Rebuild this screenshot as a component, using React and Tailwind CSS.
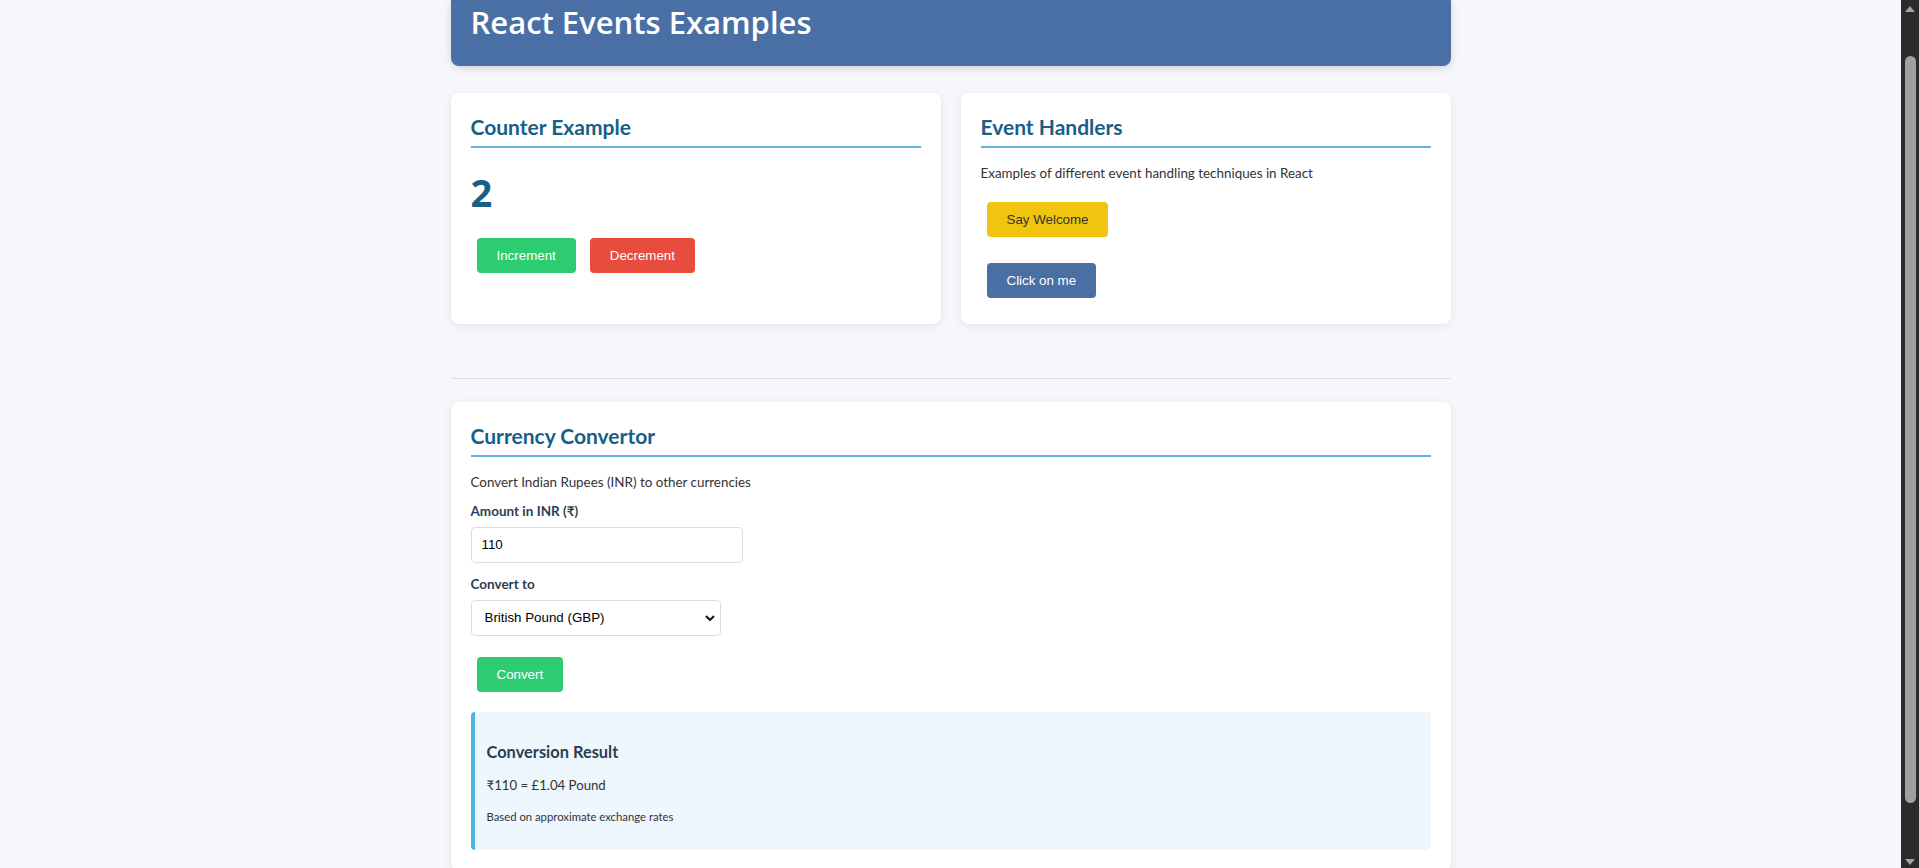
import { useState } from "react";

const rates = {
  USD: { label: "US Dollar (USD)", symbol: "$", rate: 0.012, name: "Dollar" },
  EUR: { label: "Euro (EUR)", symbol: "€", rate: 0.011, name: "Euro" },
  GBP: { label: "British Pound (GBP)", symbol: "£", rate: 0.0095, name: "Pound" },
  JPY: { label: "Japanese Yen (JPY)", symbol: "¥", rate: 1.8, name: "Yen" },
};

function Card({ title, children, className = "" }) {
  return (
    <div className={"rounded-lg bg-white p-5 shadow-[0_2px_10px_rgba(0,0,0,0.08)] " + className}>
      <h2 className="mt-[2px] border-b-2 border-[#5fb5dd] pb-[7px] text-[21px] font-bold leading-[24px] text-[#166088]">
        {title}
      </h2>
      {children}
    </div>
  );
}

function Btn({ children, className = "", onClick }) {
  return (
    <button
      onClick={onClick}
      className={
        "h-[35px] rounded px-5 font-['Liberation_Sans',Arial,sans-serif] text-[13.33px] " + className
      }
    >
      {children}
    </button>
  );
}

function Scrollbar() {
  return (
    <div className="flex h-full w-[18px] shrink-0 flex-col items-center bg-[#2b2b2b]">
      <svg width="10" height="6" viewBox="0 0 10 6" className="mt-[6px]">
        <polygon points="5,0 10,6 0,6" fill="#a3a3a3" />
      </svg>
      <div className="mt-[44px] h-[747px] w-[11px] rounded-full bg-[#a0a0a0]" />
      <div className="flex-1" />
      <svg width="10" height="6" viewBox="0 0 10 6" className="mb-[3px]">
        <polygon points="0,0 10,0 5,6" fill="#a3a3a3" />
      </svg>
    </div>
  );
}

export default function App() {
  const [count, setCount] = useState(2);
  const [amount, setAmount] = useState("110");
  const [currency, setCurrency] = useState("GBP");
  const [result, setResult] = useState({ amount: "110", currency: "GBP" });

  const cur = rates[result.currency];
  const converted = (parseFloat(result.amount || 0) * cur.rate).toFixed(2);

  return (
    <div className="flex h-screen w-full overflow-hidden bg-[#f5f7fa] font-['Lato','Open_Sans',sans-serif] text-[#333]">
      <div className="min-w-0 flex-1 overflow-hidden">
        <div className="mx-auto w-[1000px]">
          {/* header */}
          <header className="h-[66px] rounded-b-lg bg-[#4a6fa5] px-5 pt-[4px] shadow-[0_2px_8px_rgba(0,0,0,0.15)]">
            <h1 className="font-['Open_Sans',sans-serif] text-[31px] font-semibold leading-[1.2] text-white">
              React Events Examples
            </h1>
          </header>

          <div className="mt-[27px] grid grid-cols-2 gap-5">
            <Card title="Counter Example">
              <div className="mt-[25px] font-['Open_Sans',sans-serif] text-[38px] font-bold leading-none text-[#166088]">
                {count}
              </div>
              <div className="mt-[27px] flex gap-[14px] pl-[6px]">
                <Btn className="bg-[#2ecc71] text-white" onClick={() => setCount(count + 1)}>
                  Increment
                </Btn>
                <Btn className="bg-[#e74c3c] text-white" onClick={() => setCount(count - 1)}>
                  Decrement
                </Btn>
              </div>
            </Card>

            <Card title="Event Handlers" className="pb-[26px]">
              <p className="mt-[15px] text-[13.4px] leading-[21px]">
                Examples of different event handling techniques in React
              </p>
              <div className="mt-[18px] pl-[6px]">
                <Btn className="bg-[#f1c40f] text-[#333]" onClick={() => alert("Welcome!")}>
                  Say Welcome
                </Btn>
              </div>
              <div className="mt-[26px] pl-[6px]">
                <Btn className="bg-[#4a6fa5] text-white" onClick={() => alert("You clicked me")}>
                  Click on me
                </Btn>
              </div>
            </Card>
          </div>

          <hr className="mt-[54px] border-0 border-t border-[#dde1e6]" />

          <Card title="Currency Convertor" className="mt-[23px]">
            <p className="mt-[15px] text-[13.4px] leading-[21px]">
              Convert Indian Rupees (INR) to other currencies
            </p>
            <label className="mt-[9px] block text-[13.5px] font-bold leading-[19.5px] text-[#2c3e50]">
              Amount in INR (₹)
            </label>
            <input
              type="number"
              value={amount}
              onChange={(e) => setAmount(e.target.value)}
              className="mt-[5px] block h-[36px] w-[272px] rounded border border-[#ddd] px-[10px] font-['Liberation_Sans',Arial,sans-serif] text-[13.33px] text-black outline-none"
            />
            <label className="mt-[12px] block text-[13.5px] font-bold leading-[19.5px] text-[#2c3e50]">
              Convert to
            </label>
            <div className="relative mt-[6px] w-[250px]">
              <select
                value={currency}
                onChange={(e) => setCurrency(e.target.value)}
                className="block h-[36px] w-full appearance-none rounded border border-[#ddd] bg-white pl-[13px] font-['Liberation_Sans',Arial,sans-serif] text-[13.33px] text-black outline-none"
              >
                {Object.entries(rates).map(([k, v]) => (
                  <option key={k} value={k}>
                    {v.label}
                  </option>
                ))}
              </select>
              <svg
                width="10"
                height="6"
                viewBox="0 0 10 6"
                className="pointer-events-none absolute right-[6px] top-[15px]"
              >
                <path d="M1 1 L5 5 L9 1" fill="none" stroke="#111" strokeWidth="2" />
              </svg>
            </div>
            <div className="mt-[21px] pl-[6px]">
              <Btn className="bg-[#2ecc71] text-white" onClick={() => setResult({ amount, currency })}>
                Convert
              </Btn>
            </div>

            <div className="mt-[20px] rounded border-l-4 border-[#4cb5e5] bg-[#eef7fe] pb-[25px] pl-3 pt-[29px]">
              <h3 className="text-[16.4px] font-bold leading-[21px] text-[#2c3e50]">Conversion Result</h3>
              <p className="mt-[13px] text-[13.2px] leading-[20px] text-[#333]">
                ₹{result.amount} = {cur.symbol}
                {converted} {cur.name}
              </p>
              <p className="mt-[13px] text-[11.3px] leading-[17px] text-[#333]">Based on approximate exchange rates</p>
            </div>
          </Card>
        </div>
      </div>
      <Scrollbar />
    </div>
  );
}
